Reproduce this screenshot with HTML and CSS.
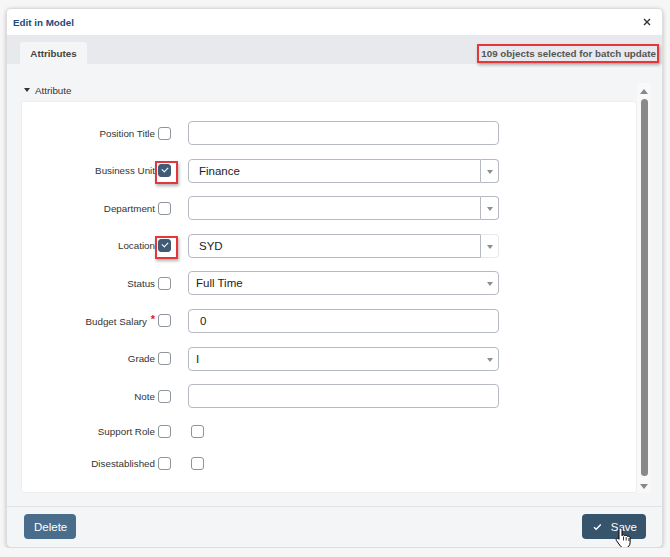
FILE: index.html
```html
<!DOCTYPE html>
<html lang="en">
<head>
    <meta charset="UTF-8">
    <meta name="viewport" content="width=device-width, initial-scale=1.0">
    <title>Edit in Model</title>
    <link rel="stylesheet" href="styles.css">
</head>
<body>
    <div class="dialog">
        <div class="head">
            <span class="title">Edit in Model</span>
            <span class="close">
                <svg width="8" height="8" viewBox="0 0 8 8"><path d="M1 1L7 7M7 1L1 7" stroke="#333" stroke-width="1.4"/></svg>
            </span>
        </div>
        <div class="tabs">
            <div class="tab">Attributes</div>
            <div class="batch">109 objects selected for batch update</div>
        </div>
        <div class="body">
            <div class="content">
                <div class="section"><span class="caret"></span>Attribute</div>
                <div class="panel">
                    <div class="row">
                        <label>Position Title</label><span class="check"></span>
                        <div class="field"></div>
                    </div>
                    <div class="row">
                        <label>Business Unit</label><span class="check on mark"></span>
                        <div class="combo"><div class="field">Finance</div><div class="drop"><span class="arrow"></span></div></div>
                    </div>
                    <div class="row">
                        <label>Department</label><span class="check"></span>
                        <div class="combo"><div class="field"></div><div class="drop"><span class="arrow"></span></div></div>
                    </div>
                    <div class="row">
                        <label>Location</label><span class="check on mark"></span>
                        <div class="combo off"><div class="field">SYD</div><div class="drop"><span class="arrow"></span></div></div>
                    </div>
                    <div class="row">
                        <label>Status</label><span class="check"></span>
                        <div class="field select">Full Time<span class="arrow"></span></div>
                    </div>
                    <div class="row">
                        <label>Budget Salary <span class="req">*</span></label><span class="check"></span>
                        <div class="field num">0</div>
                    </div>
                    <div class="row">
                        <label>Grade</label><span class="check"></span>
                        <div class="field select">I<span class="arrow"></span></div>
                    </div>
                    <div class="row">
                        <label>Note</label><span class="check"></span>
                        <div class="field"></div>
                    </div>
                    <div class="row short">
                        <label>Support Role</label><span class="check"></span>
                        <span class="check value"></span>
                    </div>
                    <div class="row short">
                        <label>Disestablished</label><span class="check"></span>
                        <span class="check value"></span>
                    </div>
                </div>
            </div>
            <div class="scrollbar">
                <span class="up"></span>
                <span class="thumb"></span>
                <span class="down"></span>
            </div>
        </div>
        <div class="foot">
            <button class="btn">Delete</button>
            <button class="btn save">
                <svg width="9" height="8" viewBox="0 0 9 8"><path d="M1 4.2L3.3 6.4L8 1.4" fill="none" stroke="#fff" stroke-width="1.4"/></svg>
                Save
                <svg class="pointer" width="18" height="23" viewBox="0 0 18 23">
                    <path d="M5.5 1c.9 0 1.5.6 1.5 1.4v6.3c.3-.6.8-.9 1.5-.9.8 0 1.3.5 1.4 1.1.3-.4.8-.6 1.3-.6.8 0 1.3.5 1.4 1.2.3-.2.6-.3 1-.3.8 0 1.5.7 1.5 1.5v4.8c0 3-2.2 5.5-5.1 5.5H9.2c-1.6 0-3-.8-3.9-2.1L1.4 13.5c-.5-.7-.3-1.6.4-2 .6-.4 1.4-.3 1.8.2L4 12.3V2.4C4 1.6 4.6 1 5.5 1z" fill="#fff" stroke="#000" stroke-width="1"/>
                    <path d="M8.5 9.5v4M11.2 10v3.5M13.9 11v3" stroke="#000" stroke-width="0.8"/>
                </svg>
            </button>
        </div>
    </div>
</body>
</html>
```

FILE: styles.css
```css
* {
    box-sizing: border-box;
}
body {
    margin: 0;
    background-color: #f6f6f6;
    font-family: "Liberation Sans", Arial, sans-serif;
    color: #333;
}
.dialog {
    width: 657px;
    height: 540px;
    margin: 8px 0 0 6px;
    border: 1px solid #dcdcdc;
    border-radius: 5px;
    background-color: #f4f5f7;
    box-shadow: 0 1px 4px rgba(0, 0, 0, 0.22);
    display: flex;
    flex-direction: column;
    overflow: hidden;
}
.head {
    height: 26px;
    background-color: #fff;
    display: flex;
    align-items: center;
    justify-content: space-between;
    padding: 0 11px 0 6px;
}
.title {
    font-size: 9.8px;
    font-weight: bold;
    color: #1d4a7c;
}
.close {
    display: flex;
}
.tabs {
    height: 29px;
    background-color: #e8e9ec;
    display: flex;
    align-items: flex-end;
    justify-content: space-between;
    padding: 0 3px 0 13px;
}
.tab {
    width: 67px;
    height: 22px;
    background-color: #f4f5f7;
    border-radius: 3px 3px 0 0;
    font-size: 9.8px;
    font-weight: bold;
    color: #444;
    display: flex;
    align-items: center;
    justify-content: center;
}
.batch {
    height: 19px;
    margin-bottom: 1px;
    padding: 0 1px 0 2px;
    border: 2px solid #e3373c;
    box-shadow: 1px 2px 3px rgba(0, 0, 0, 0.3);
    font-size: 9.8px;
    font-weight: bold;
    color: #555;
    display: flex;
    align-items: center;
}
.body {
    height: 442px;
    display: flex;
    padding: 19px 11px 13px 14px;
}
.content {
    flex: 1;
    display: flex;
    flex-direction: column;
}
.section {
    height: 18px;
    padding: 0 0 4px 3px;
    font-size: 9.8px;
    display: flex;
    align-items: center;
    gap: 5px;
}
.caret {
    width: 0;
    height: 0;
    border-left: 3.5px solid transparent;
    border-right: 3.5px solid transparent;
    border-top: 4px solid #333;
}
.panel {
    flex: 1;
    background-color: #fff;
    border: 1px solid #eceef0;
    border-radius: 3px;
    padding-top: 19px;
    display: flex;
    flex-direction: column;
    gap: 13.6px;
}
.row {
    height: 24px;
    display: flex;
    align-items: center;
}
.row.short {
    height: 19px;
}
.row label {
    width: 133px;
    text-align: right;
    font-size: 9.8px;
    color: #333;
}
.req {
    position: relative;
    top: -2px;
    margin-left: 1px;
    font-size: 11px;
    color: #e02020;
    font-weight: bold;
}
.check {
    position: relative;
    width: 13px;
    height: 13px;
    margin-left: 3px;
    border: 1px solid #8f959d;
    border-radius: 3px;
    background-color: #fff;
}
.check.value {
    margin-left: 20px;
}
.check.on {
    background-color: #3f5b75;
    border-color: #3f5b75;
}
.check.on::before {
    content: "";
    position: absolute;
    left: 3px;
    top: 2px;
    width: 5px;
    height: 3px;
    border-left: 1.5px solid #fff;
    border-bottom: 1.5px solid #fff;
    transform: rotate(-45deg);
}
.mark::after {
    content: "";
    position: absolute;
    left: -4px;
    top: -4px;
    width: 19px;
    height: 19px;
    border: 2px solid #e3373c;
    box-shadow: 1px 2px 3px rgba(0, 0, 0, 0.3);
}
.field {
    position: relative;
    width: 311px;
    height: 24px;
    margin-left: 17px;
    border: 1px solid #b5bac2;
    border-radius: 4px;
    padding-left: 10px;
    font-size: 11.5px;
    color: #222;
    display: flex;
    align-items: center;
}
.field.select {
    padding-left: 7px;
}
.field.num {
    padding-left: 11px;
}
.combo {
    display: flex;
    margin-left: 17px;
}
.combo .field {
    width: 293px;
    margin-left: 0;
    border-radius: 4px 0 0 4px;
}
.drop {
    position: relative;
    width: 18px;
    height: 24px;
    border: 1px solid #b5bac2;
    border-left: none;
    border-radius: 0 4px 4px 0;
}
.combo.off .drop {
    border-color: #e6e8eb;
}
.arrow {
    position: absolute;
    right: 5px;
    top: 10px;
    width: 0;
    height: 0;
    border-left: 3.5px solid transparent;
    border-right: 3.5px solid transparent;
    border-top: 4px solid #8a8d92;
}
.scrollbar {
    width: 14px;
    background-color: #f9f9fa;
    display: flex;
    flex-direction: column;
    align-items: center;
    padding-top: 6px;
}
.up {
    width: 0;
    height: 0;
    border-left: 4px solid transparent;
    border-right: 4px solid transparent;
    border-bottom: 5px solid #888;
}
.thumb {
    width: 7px;
    height: 377px;
    margin-top: 5px;
    border-radius: 4px;
    background-color: #898989;
}
.down {
    width: 0;
    height: 0;
    margin-top: 8px;
    border-left: 4px solid transparent;
    border-right: 4px solid transparent;
    border-top: 5px solid #888;
}
.foot {
    height: 41px;
    border-top: 1px solid #e2e3e6;
    padding: 7px 16px 0 17px;
    display: flex;
    align-items: flex-start;
    justify-content: space-between;
}
.btn {
    height: 25px;
    padding: 0 9px 0 10px;
    border: none;
    border-radius: 4px;
    background-color: #4a6d8c;
    color: white;
    font-family: "Liberation Sans", Arial, sans-serif;
    font-size: 11.5px;
    cursor: pointer;
    display: flex;
    align-items: center;
}
.btn.save {
    position: relative;
    width: 64px;
    padding-left: 11px;
    gap: 9px;
    background-color: #37546d;
}
.pointer {
    position: absolute;
    left: 33px;
    top: 13px;
}
```
